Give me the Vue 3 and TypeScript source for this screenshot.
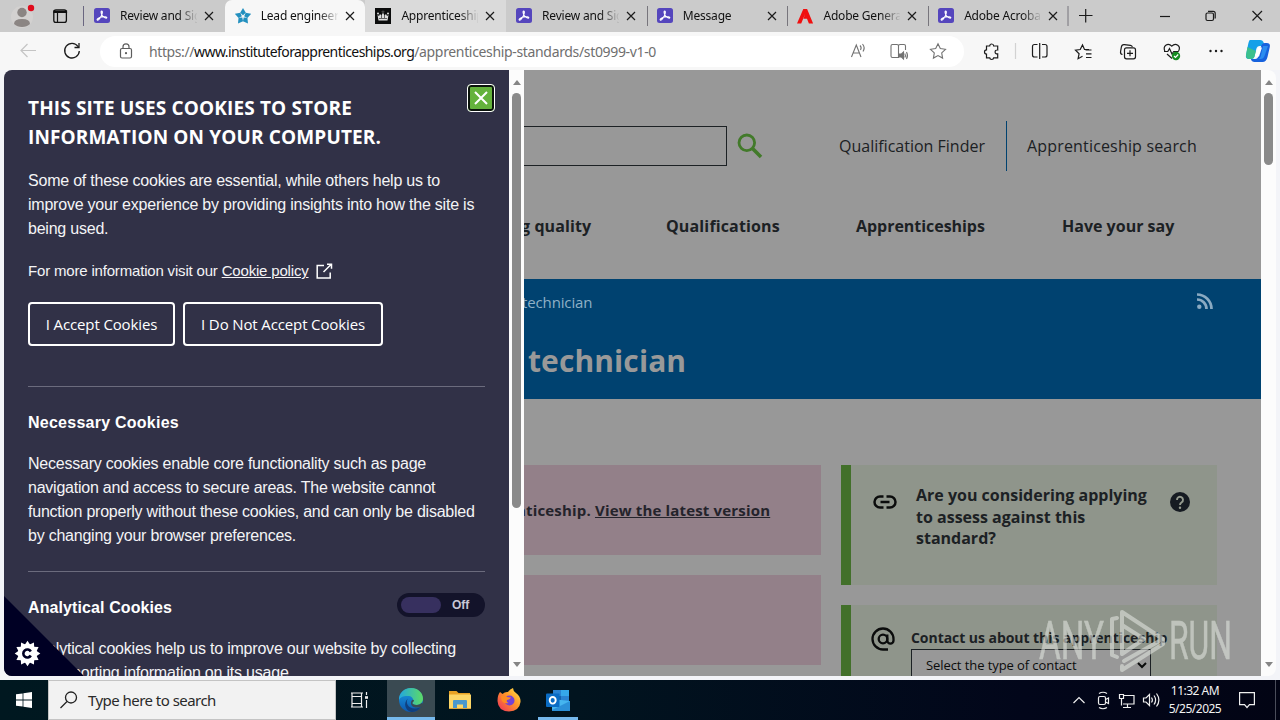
<script setup lang="ts">
interface Tab {
  title: string
  icon: 'acrobat' | 'star' | 'crown' | 'adobe'
  state: '' | 'active' | 'light'
}

const tabs: Tab[] = [
  { title: 'Review and Sign', icon: 'acrobat', state: '' },
  { title: 'Lead engineering', icon: 'star', state: 'active' },
  { title: 'Apprenticeships', icon: 'crown', state: 'light' },
  { title: 'Review and Sign', icon: 'acrobat', state: '' },
  { title: 'Message', icon: 'acrobat', state: '' },
  { title: 'Adobe General', icon: 'adobe', state: '' },
  { title: 'Adobe Acrobat', icon: 'acrobat', state: '' },
]
const teeth: number[] = Array.from({ length: 12 }, (_, i) => i * 30)
</script>

<template>
  <div class="screen">
    <header class="tabs">
      <div class="profile">
        <svg width="84" height="32" viewBox="0 0 84 32">
          <circle cx="22" cy="17" r="11" fill="#d3d1d0" />
          <circle cx="22" cy="12.500" r="4.700" fill="#8b8583" />
          <path d="M14 24q0-5 8-5t8 5q-3 3-8 3t-8-3z" fill="#8b8583" />
          <circle cx="31" cy="8" r="3.200" fill="#e00b1c" />
          <rect x="53.800" y="9.800" width="12.600" height="12.600" rx="2.200" fill="none" stroke="#111" stroke-width="1.300" />
          <path d="M54 11h12.500v1.500h-12.500zM57.500 13v9" stroke="#111" stroke-width="1.200" fill="#111" />
          <path d="M83.500 6v20" stroke="#6a6680" />
        </svg>
      </div>
      <div v-for="(tab, i) in tabs" :key="i" class="tab" :class="[tab.state, 't' + i]">
        <svg class="fav" width="16" height="16" viewBox="0 0 16 16">
          <template v-if="tab.icon === 'acrobat'">
            <rect width="16" height="15" rx="2.500" fill="#5546bd" />
            <path d="M7.600 3c1.300 0 .8 3-.5 5.300C5.800 10.800 4 12.500 3.300 12c-.9-.7 1.500-2.400 4.500-3 2.800-.6 5.200-.3 5 .7-.3 1.200-3.100-.2-4.400-2C7 5.800 6.700 3 7.600 3z" fill="none" stroke="#fff" stroke-width="1.100" />
          </template>
          <template v-else-if="tab.icon === 'star'">
            <g fill="#2390bf">
              <path v-for="a in [0, 72, 144, 216, 288]" :key="a" d="M8 0l2.800 4.800L8 7.300 5.200 4.800z" :transform="`rotate(${a} 8 8.500)`" />
            </g>
          </template>
          <template v-else-if="tab.icon === 'crown'">
            <rect width="16" height="16" fill="#0b0c0c" />
            <path d="M2.500 7l1.500 1 1-2 1.500 1.500L8 4.500l1.500 3L11 6l1 2 1.500-1-1 5.500h-9z" fill="#ddd" />
            <path d="M4 10.500h8M8 2.500v3M6.500 3.800h3M6.500 7v3M9.500 7v3" stroke="#555" stroke-width=".9" />
            <circle cx="3" cy="5.500" r="1" fill="#ddd" /><circle cx="13" cy="5.500" r="1" fill="#ddd" />
          </template>
          <path v-else d="M0 15.500L6.300 1h3.800l6 14.500h-4.200L10 10.800H6.500L8.100 6 4.200 15.500z" fill="#f01010" />
        </svg>
        <span class="tab-title">{{ tab.title }}</span>
        <svg class="tab-x" width="10" height="10" viewBox="0 0 10 10"><path d="M1 1l8 8M9 1l-8 8" stroke="#1b1b1b" stroke-width="1.200" /></svg>
      </div>
      <svg class="winctl" width="211" height="32" viewBox="0 0 211 32">
        <g stroke="#1b1b1b" stroke-width="1.200" fill="none">
          <path d="M-1 6v20" stroke="#77757c" stroke-width="1" />
          <path d="M10 15.500h13.500M16.700 9v13.500" />
          <path d="M91 16.500h10" />
          <rect x="137" y="13" width="7.500" height="7.500" rx="1.500" /><path d="M139 11.300h5.200a2 2 0 0 1 2 2v5.200" />
          <path d="M183.500 11l9.500 9.500M193 11l-9.500 9.500" />
        </g>
      </svg>
    </header>

    <div class="toolbar">
      <svg width="100" height="38" viewBox="0 0 100 38" fill="none">
        <path d="M36 18.500H21M27.500 12l-6.500 6.500 6.500 6.500" stroke="#c4c4c4" stroke-width="1.200" />
        <path d="M78 14.500A7.300 7.300 0 1 0 79.300 19M79 11v4.500h-4.500" stroke="#1b1b1b" stroke-width="1.300" />
      </svg>
      <div class="address">
        <svg width="14" height="16" viewBox="0 0 14 16" fill="none" stroke="#5d5d5d" stroke-width="1.200">
          <rect x="1.500" y="5.500" width="11" height="9.500" rx="1.500" /><path d="M4 5.500V3.800a3 3 0 0 1 6 0v1.700" /><circle cx="7" cy="10.200" r=".5" />
        </svg>
        <span class="url"><i>https://</i><b>www.instituteforapprenticeships.org</b><i class="path">/apprenticeship-standards/st0999-v1-0</i></span>
        <svg class="addr-icons" width="114" height="38" viewBox="850 32 114 38" fill="none" stroke="#727272" stroke-width="1.100">
          <path d="M851.500 57l4.800-12 4.700 12M853.200 53h6.200M860 45.500q2 2 .5 4.500M862.500 44q3 3.500.5 7.500" />
          <path d="M898.500 57.500h-6q-1.500 0-1.500-1.500V46q0-1.500 1.500-1.500h4.500q1.500 0 1.500 1.500zM898.500 46q0-1.500 1.500-1.500h4q1.500 0 1.500 1.500v4" />
          <path d="M899.500 54h2l2-2v7l-2-2h-2z" fill="#727272" /><path d="M904.800 53.500q1.200 2 0 4M906.500 52q2 3.500 0 7" />
          <path d="M938 43.800l2.300 4.800 5.200.7-3.800 3.600.9 5.200-4.600-2.500-4.600 2.500.9-5.200-3.800-3.600 5.200-.7z" />
        </svg>
      </div>
      <svg class="tools" width="316" height="38" viewBox="964 32 316 38" fill="none" stroke="#1b1b1b" stroke-width="1.200">
        <path d="M986.500 46h3.200q.1-2 2-2t2 2h4v4q-2.600-.2-2.600 1.900t2.600 1.900v4h-4q-.1 1.700-2 1.700t-2-1.700h-3.200v-3.700q-2-.1-2-2.100t2-2.100z" />
        <path d="M1015.500 43v16" stroke="#d2d2d2" />
        <path d="M1037.500 57h-3q-2 0-2-2v-8.500q0-2 2-2h3M1042 44.500h3q2 0 2 2V55q0 2-2 2h-3M1039.700 43v16" />
        <path d="M1089 49.500h-4.500l-2-4.500-2.300 4.500-4.700.7 3.600 3.500-1 5 4.400-2.400M1085.500 50h6M1086 53.800h5.500M1086 57.500h5.500" />
        <path d="M1122.500 54.500c-1.500-.3-2.200-1.700-1.900-3.200l.8-4.500q.4-2.600 3-2.200l6 .8q1.700.2 1.900 1.600" /><rect x="1124.500" y="47.800" width="11" height="11" rx="2" /><path d="M1130 50.300v6M1127 53.300h6" />
        <path d="M1164.800 51q-1.600-4 1-5.800 3.200-2 6 1 2.800-3 6-1 2.800 2 .8 5.800M1164 51.500h3.800l1.700-3 2.500 5.500 1.700-2.500h5M1167 54l5 4.500" />
        <circle cx="1176" cy="56" r="4.200" fill="#168b22" stroke="none" /><path d="M1174 56l1.500 1.500 2.700-3" stroke="#fff" />
        <g fill="#1b1b1b" stroke="none"><circle cx="1210.500" cy="51" r="1.200" /><circle cx="1216" cy="51" r="1.200" /><circle cx="1221.500" cy="51" r="1.200" /></g>
        <g stroke="none">
          <path d="M1250 40h10q3 0 3.800 3l.8 3h-5q-2.500 0-3.300 3l-2 8q-.8 2-3 2h-2.300q-3.800 0-3-4l2-10q1-5 2-5z" fill="#14a0e8" />
          <path d="M1247.500 47l-1.500 8q0 4 3 4h2.300q2.200 0 3-2l1.600-6z" fill="#3cc08c" />
          <path d="M1265 43h1.500q4.200 0 3.300 4l-2.300 10q-1.200 5-5 5h-8q-2.800 0-3.700-3h4.400q2.500 0 3.300-3l2.400-9q1-4 4.100-4z" fill="#1762dd" />
          <path d="M1263 46h5l-3.500 10q-1 3-4 3h-3q2.500 0 3.300-3z" fill="#2a8cf0" />
          <path d="M1258 47.500h4l-3 9h-4z" fill="#fff" />
        </g>
      </svg>
    </div>

    <main class="viewport">
      <div class="window">
        <aside class="drawer">
          <button class="close"><svg width="16" height="16" viewBox="0 0 16 16"><path d="M2 2l12 12M14 2L2 14" stroke="#fff" stroke-width="2" /></svg></button>
          <h2 class="title">THIS SITE USES COOKIES TO STORE<br>INFORMATION ON YOUR COMPUTER.</h2>
          <p class="copy first-copy">Some of these cookies are essential, while others help us to<br>improve your experience by providing insights into how the site is<br>being used.</p>
          <p class="more">For more information visit our <u>Cookie policy</u>
            <svg width="18" height="17" viewBox="0 0 18 17"><path d="M9 2.500H2.200V15h13V9.500M8.500 9L16 1.500M12 1.200h4.500v4.500" fill="none" stroke="#fff" stroke-width="1.500" /></svg>
          </p>
          <div class="buttons"><button>I Accept Cookies</button><button class="no">I Do Not Accept Cookies</button></div>
          <hr>
          <h3 class="nec">Necessary Cookies</h3>
          <p class="copy c2">Necessary cookies enable core functionality such as page<br>navigation and access to secure areas. The website cannot<br>function properly without these cookies, and can only be disabled<br>by changing your browser preferences.</p>
          <hr class="hr2">
          <div class="analytics"><h3>Analytical Cookies</h3><div class="toggle"><i></i><span>Off</span></div></div>
          <p class="copy c3">Analytical cookies help us to improve our website by collecting<br>and reporting information on its usage.</p>
          <svg class="corner" width="80" height="80" viewBox="0 0 80 80">
            <path d="M0 0l80 80H0z" fill="#000024" />
            <g transform="translate(23.500 57.500)">
              <circle r="9.500" fill="#fff" />
              <path v-for="a in teeth" :key="a" d="M-3.200-8L0-12.800 3.200-8z" fill="#fff" :transform="`rotate(${a})`" />
              <path d="M3.300-2A4 4 0 1 0 3.300 2" fill="none" stroke="#000024" stroke-width="2.600" />
            </g>
          </svg>
        </aside>
        <div class="scroll"><i class="up"></i><b class="long"></b><i class="down"></i></div>

        <div class="page">
          <div class="page-top">
            <div class="search-field"></div>
            <svg class="search-icon" width="26" height="26" viewBox="0 0 26 26" fill="none" stroke="#427a2a"><circle cx="9.800" cy="9.800" r="7.800" stroke-width="2.800" /><path d="M15.300 15.300l8.700 8.700" stroke-width="3.600" /></svg>
            <a class="qf">Qualification Finder</a>
            <a class="as">Apprenticeship search</a>
          </div>
          <nav class="nav"><a class="n1">g quality</a><a class="n2">Qualifications</a><a class="n3">Apprenticeships</a><a class="n4">Have your say</a></nav>
          <section class="banner">
            <div class="crumb"><span>technician</span>
              <svg width="16" height="16" viewBox="0 0 16 16" fill="none" stroke="#8aaac2" stroke-width="2.700"><circle cx="2.300" cy="13.700" r="2.200" fill="#8aaac2" stroke="none" /><path d="M0 6.500A9.500 9.500 0 0 1 9.500 16M0 1.500A14.500 14.500 0 0 1 14.500 16" /></svg>
            </div>
            <h1>technician</h1>
          </section>
          <div class="columns">
            <div class="col-left">
              <div class="pink"><span>nticeship.</span> <u>View the latest version</u></div>
              <div class="pink"></div>
            </div>
            <div class="col-right">
              <div class="card first">
                <svg class="link" width="24" height="14" viewBox="0 0 24 14" fill="none" stroke="#0b0c0c" stroke-width="2.500"><path d="M10.500 1.500H7a5.500 5.500 0 0 0 0 11h3.500M13.500 1.500H17a5.500 5.500 0 0 1 0 11h-3.500M7.500 7h9" /></svg>
                <p>Are you considering applying<br>to assess against this<br>standard?</p>
                <svg class="help" width="20" height="20" viewBox="0 0 20 20"><circle cx="10" cy="10" r="10" fill="#161b22" /><path d="M7 8a3 3 0 1 1 4.700 2.300Q10 11.500 10 13" fill="none" stroke="#959b8f" stroke-width="1.900" /><circle cx="10" cy="15.700" r="1.200" fill="#959b8f" /></svg>
              </div>
              <div class="card second">
                <svg class="at" width="24" height="24" viewBox="0 0 24 24" fill="none" stroke="#0b0c0c" stroke-width="2.300"><circle cx="12" cy="12" r="4.300" /><path d="M17 22.500h-5A10.500 10.500 0 1 1 22.500 12v1.500a3 3 0 0 1-6.200 0V7.500" /></svg>
                <div class="contact"><p>Contact us about this apprenticeship</p>
                  <div class="select">Select the type of contact<svg width="10" height="7" viewBox="0 0 10 7"><path d="M1 1l4 4 4-4" fill="none" stroke="#0b0c0c" stroke-width="2" /></svg></div>
                </div>
              </div>
            </div>
          </div>
        </div>
        <div class="scroll"><i class="up"></i><b></b><i class="down"></i></div>
      </div>
      <svg class="watermark" width="200" height="70" viewBox="1036 606 200 70">
        <g fill="#dfe3dd" font-family="Roboto, sans-serif" font-size="53" font-weight="400" stroke="#dfe3dd" stroke-width=".5">
          <text x="1039" y="659" textLength="65" lengthAdjust="spacingAndGlyphs">ANY</text>
          <text x="1169" y="659" textLength="63" lengthAdjust="spacingAndGlyphs">RUN</text>
        </g>
        <path d="M1117 618l-5 1v36l5 2M1122 630v-18l41 27-39 22M1122 654v-29l22 14zM1122 666v4l41-26v-5" fill="none" stroke="#dfe3dd" stroke-width="4" stroke-linejoin="round" stroke-linecap="round" />
      </svg>
    </main>

    <footer class="taskbar">
      <div class="start"><svg width="16" height="16" viewBox="0 0 16 16" fill="#fff"><path d="M0 2.300l6.600-.9v6.200H0zM7.400 1.200L16 0v7.600H7.400zM0 8.400h6.600v6.200L0 13.700zM7.400 8.400H16V16l-8.600-1.200z" /></svg></div>
      <div class="tsearch"><svg width="18" height="18" viewBox="0 0 18 18" fill="none" stroke="#222" stroke-width="1.300"><circle cx="11" cy="6.500" r="5.500" /><path d="M7 10.500l-6.500 6.500" /></svg><span>Type here to search</span></div>
      <div class="tview"><svg width="17" height="16" viewBox="0 0 17 16" fill="none" stroke="#eee" stroke-width="1.200"><path d="M0 1h12M0 15h12M1 4.500h9.500v7H1zM1 1v14M10.500 1v14M15.500 0v3M15.500 8v8" /><path d="M14 5.500h3" stroke-width="2.600" /></svg></div>
      <div class="app edge"><svg width="24" height="24" viewBox="0 0 24 24">
        <defs>
          <linearGradient id="eg" x1="0" x2="1"><stop stop-color="#22a7df" /><stop offset="1" stop-color="#5ddb66" /></linearGradient>
          <linearGradient id="eb" x1="0" y1="0" x2="0" y2="1"><stop stop-color="#1b9de2" /><stop offset="1" stop-color="#0c58b0" /></linearGradient>
        </defs>
        <circle cx="12" cy="12" r="12" fill="url(#eb)" />
        <path d="M0 10C1 4 6 0 12 0c7 0 12 5 12 10.500 0 4-3 6.500-6.500 6.500-3 0-4.500-1.500-4-2.500 1.500-2 .5-6-3.500-6.500C5 7.500 1 9 0 12z" fill="url(#eg)" />
        <path d="M9 10.500c-3 4 0 10 7 10 3 0 5-1 6.500-2.500C20 22.500 16 24 12 24 6 22 4 15 9 10.500z" fill="#10407f" />
        <path d="M13.500 14.500c-.7 1.200.8 2.500 4 2.500 2 0 4-.8 5-2l3 1.500c-1.500 2-4.500 3.500-9 3-3.500-.5-5-3-4.500-5 .3-2 1.500-3 2.500-2.500 1 .6.200 1.500-1 2.500z" fill="#3a4a52" />
      </svg></div>
      <div class="app"><svg width="22" height="20" viewBox="0 0 22 20"><path d="M0 1h7.500l2 2H21v15H0z" fill="#e8a224" /><path d="M0 4.500h22V18H0z" fill="#fcd667" /><path d="M4 18v-7q0-1 1-1h12q1 0 1 1v7h-4v-3.500H8V18z" fill="#4897cc" /><path d="M0 18h22v1H0z" fill="#d9a43c" /></svg></div>
      <div class="app"><svg width="24" height="24" viewBox="0 0 24 24">
        <defs><linearGradient id="ff" x1="1" y1="0" x2="0" y2="1"><stop stop-color="#ffe94a" /><stop offset=".45" stop-color="#ff9528" /><stop offset="1" stop-color="#ef2a5f" /></linearGradient></defs>
        <path d="M3 4l2.500 2Q8 3.500 11 4q2-3 5-4 0 3 3 5 5 4 4.500 9-1 9-11.500 9.500Q1 23 .5 13 .5 7 3 4z" fill="url(#ff)" />
        <circle cx="12.500" cy="12.500" r="5" fill="#7442d5" /><path d="M4 8q4-1 6 1l4 .5q-1 2-4 2.500-1 2 1.500 3-5 1-7-3z" fill="#ff8b22" />
      </svg></div>
      <div class="app outlook"><svg width="24" height="24" viewBox="0 0 24 24"><path d="M7 2h16v12H7z" fill="#2a83d2" /><path d="M15 2h8v6h-8z" fill="#35a8ea" /><path d="M7 8h8v7H7z" fill="#1464ad" /><path d="M6 11l18 2v10H6z" fill="#45b5ef" /><path d="M6 22l18-9v10H6z" fill="#2b90d8" /><rect y="5.500" width="13.500" height="13.500" rx="1" fill="#0a6cc4" /><ellipse cx="6.700" cy="12.300" rx="3" ry="3.300" fill="none" stroke="#fff" stroke-width="1.900" /></svg></div>
      <div class="tray">
        <svg width="96" height="40" viewBox="1068 680 96 40" fill="none" stroke="#eee" stroke-width="1.200">
          <path d="M1073.500 703l5.500-5.500 5.500 5.500" />
          <rect x="1098.500" y="696.500" width="7" height="8" rx="1.500" /><path d="M1105.500 699.500l3-1.500v5.500l-3-1.500M1099 693.500q4-2.500 8 0M1099 707.500q4 2.500 8 0" />
          <path d="M1124 695.500h10v8.500h-11M1127.500 704v3.500M1123 707.500h8M1119.500 694.500h4v4h-4zM1121.500 698.500v7" />
          <path d="M1143.500 698h2.500l3.500-3.500v11L1146 702h-2.500zM1151.500 697.500q1.800 2.500 0 5M1154 695.500q3.200 4.500 0 9M1156.500 693.500q4.800 6.500 0 13" />
        </svg>
        <div class="clock"><span>11:32 AM</span><span>5/25/2025</span></div>
        <svg class="note" width="16" height="17" viewBox="0 0 16 17"><path d="M.6.6h14.800v12H10.500L8 15.500l-2.500-2.900H.6z" fill="none" stroke="#eee" stroke-width="1.200" /></svg>
        <i class="peek"></i>
      </div>
    </footer>
  </div>
</template>

<style scoped>
* { box-sizing: border-box; }
h1, h2, h3, p { margin: 0; }
svg { flex: none; display: block; }
i { font-style: normal; }
.screen { width: 1280px; height: 720px; overflow: hidden; display: flex; flex-direction: column; font-family: "Open Sans", "Noto Sans", sans-serif; background: #f6f6f7; white-space: nowrap; }

.tabs { height: 32px; display: flex; background: #cbcbcb; flex: none; }
.profile { width: 84px; }
.tab { width: 140.7px; height: 32px; display: flex; align-items: center; padding-left: 10px; flex: none; }
.tab.active { background: #f7f7f7; border-radius: 7px 7px 0 0; }
.tab.light { background: #dadada; }
.t4, .t5, .t6 { background: linear-gradient(#77757c, #77757c) 0 6px / 1px 20px no-repeat; }
.tab-title { width: 77px; margin-left: 10px; font-family: "Noto Sans", sans-serif; font-size: 12px; line-height: 16px; letter-spacing: -.2px; color: #111; overflow: hidden; mask-image: linear-gradient(90deg, #000 58px, transparent 78px); }
.tab-x { margin-left: 7px; }
.winctl { overflow: visible; }

.toolbar { height: 38px; display: flex; align-items: center; flex: none; background: #f7f7f7; }
.address { width: 864px; height: 31px; border-radius: 16px; background: #fff; display: flex; align-items: center; padding-left: 19px; }
.url { margin-left: 16px; font-size: 14px; font-family: "Noto Sans", sans-serif; letter-spacing: -.4px; width: 701px; color: #111; }
.url b { font-weight: 400; letter-spacing: -.58px; }
.url i { color: #6f6f6f; }
.url .path { letter-spacing: -.34px; }

.viewport { height: 610px; padding: 0 4px 4px; position: relative; background: #f3f4f8; }
.window { height: 606px; display: flex; border-radius: 8px; overflow: hidden; }
.drawer { width: 505px; height: 606px; flex: none; padding: 24px 24px 0; background: #313147; color: #fff; position: relative; overflow: hidden; font-family: "Liberation Sans", Arial, sans-serif; }
.close { position: absolute; left: 463px; top: 14px; width: 28px; height: 28px; padding: 0; border: 1px solid #fff; border-radius: 4px; background: #64b23c; box-shadow: inset 0 0 0 2px #0b140c; display: flex; align-items: center; justify-content: center; }
.title { font: 700 19px/29px "Open Sans", sans-serif; letter-spacing: .14px; }
.copy { margin-top: 17px; font-size: 16px; line-height: 24px; letter-spacing: -.21px; color: #f4f4f6; }
.first-copy { letter-spacing: -.22px; }
.more { margin-top: 18px; font-size: 15px; line-height: 24px; letter-spacing: -.18px; display: flex; align-items: center; white-space: pre; color: #f4f4f6; }
.more svg { margin-left: 6px; }
.buttons { margin-top: 19px; display: flex; gap: 8px; }
.buttons button { width: 147px; height: 44px; padding: 0; border: 2px solid #fff; border-radius: 4px; background: none; color: #fff; font: 15px "Open Sans", sans-serif; letter-spacing: -.13px; }
.buttons .no { width: 200px; }
hr { border: 0; height: 1px; margin: 40px 0 0; background: #6b6b7d; width: 457px; }
h3 { font-size: 16px; line-height: 24px; letter-spacing: .1px; }
.nec { margin-top: 24px; letter-spacing: .25px; }
.c2 { margin-top: 17px; letter-spacing: -.23px; }
.hr2 { margin-top: 23px; }
.analytics { display: flex; margin-top: 21px; width: 457px; justify-content: space-between; }
.analytics h3 { margin-top: 3px; }
.toggle { width: 88px; height: 24px; border-radius: 12px; background: #13132a; padding: 4px; display: flex; align-items: center; font-weight: 700; font-size: 12px; color: #c8c8d6; }
.toggle i { width: 40px; height: 16px; border-radius: 8px; background: #37305f; margin-right: 11px; }
.c3 { margin-top: 17px; }
.corner { position: absolute; left: 0; bottom: 0; }
.scroll { width: 15px; background: #fcfcfc; display: flex; flex-direction: column; align-items: center; padding: 10px 0 9px; flex: none; }
.scroll b { width: 9px; height: 72px; border-radius: 5px; background: #8a8a8a; margin-top: 8px; }
.scroll b.long { height: 415px; }
.up, .down { border: 4.5px solid transparent; border-top: 0; border-bottom: 5px solid #858585; }
.down { margin-top: auto; border-bottom: 0; border-top: 5px solid #858585; }

.page { width: 737px; background: #989898; color: #1c2124; overflow: hidden; flex: none; }
.page-top { height: 131px; padding-top: 51px; display: flex; font-size: 16px; }
.search-field { width: 203px; height: 40px; margin-top: 5px; border: 1px solid #1c2124; border-left: 0; }
.search-icon { margin: 12px 0 0 10px; }
.qf { line-height: 50px; height: 50px; margin-left: 76px; width: 168px; border-right: 1px solid #004270; }
.as { line-height: 50px; margin-left: 20px; letter-spacing: .17px; }
.nav { height: 78px; display: flex; font-weight: 700; font-size: 16px; line-height: 50px; }
.n1 { margin-left: -3px; width: 145px; letter-spacing: .1px; }
.n2 { width: 190px; letter-spacing: .14px; }
.n3 { width: 206px; letter-spacing: -.04px; }
.banner { height: 120px; background: #004270; }
.crumb { display: flex; justify-content: space-between; align-items: flex-start; padding: 14px 48px 0 0; font-size: 15px; line-height: 20px; color: #8fb0c6; }
.crumb span { margin: -1px 0 0 -2px; letter-spacing: -.13px; }
h1 { margin: 29px 0 0 4px; font-size: 30px; line-height: 40px; letter-spacing: .1px; color: #999; }
.columns { display: flex; gap: 20px; padding-top: 66px; }
.col-left { width: 297px; }
.pink { height: 90px; margin-bottom: 20px; background: #938089; color: #24232b; font-weight: 700; font-size: 15px; letter-spacing: .17px; line-height: 91px; overflow: hidden; }
.pink span { margin-left: -8px; }
.card { width: 376px; height: 120px; border-left: 10px solid #42702a; background: #8f958b; margin-bottom: 20px; display: flex; font-weight: 700; overflow: hidden; }
.link { margin: 30px 0 0 22px; }
.card.first p { margin: 20px 0 0 19px; width: 254px; font-size: 16px; line-height: 21.5px; }
.help { margin-top: 27px; }
.at { margin: 22px 0 0 20px; }
.contact { margin: 22px 0 0 16px; font-size: 14px; line-height: 22px; letter-spacing: -.05px; }
.select { width: 240px; height: 33px; border: 1px solid #1c2124; background: #989898; padding: 0 3px 0 14px; font-weight: 400; font-size: 13px; letter-spacing: -.08px; line-height: 31px; color: #0b0c0c; display: flex; align-items: center; justify-content: space-between; }
.watermark { position: absolute; left: 1036px; top: 536px; opacity: .6; }

.taskbar { height: 40px; flex: none; display: flex; background: linear-gradient(90deg, #001820, #01141f 45%, #02061a 80%, #020414); }
.start { width: 48px; display: flex; align-items: center; justify-content: center; }
.tsearch { width: 288px; background: #f2f2f2; border: 1px solid #c4c4c4; display: flex; align-items: center; padding-left: 11px; font-size: 15px; color: #2a2a2a; font-family: "Noto Sans", sans-serif; }
.tsearch span { margin-left: 10px; letter-spacing: -.54px; }
.tview { width: 51px; padding-left: 15px; display: flex; align-items: center; }
.app { width: 48px; height: 40px; margin-right: 1px; display: flex; align-items: center; justify-content: center; }
.edge { background: linear-gradient(#3a4a52 37px, #76b9ed 37px); }
.outlook { background: linear-gradient(#76b9ed, #76b9ed) 4px 37px / 40px 3px no-repeat; }
.tray { margin-left: auto; width: 212px; display: flex; align-items: center; color: #f2f2f2; }
.clock { width: 62px; display: flex; flex-direction: column; align-items: center; font-size: 12px; line-height: 18px; letter-spacing: -.5px; font-family: "Noto Sans", sans-serif; }
.note { margin-left: 13px; }
.peek { width: 1px; height: 40px; margin-left: 20px; background: #4a4d5a; }
</style>

<style>
html, body { margin: 0; overflow: hidden; }
</style>
